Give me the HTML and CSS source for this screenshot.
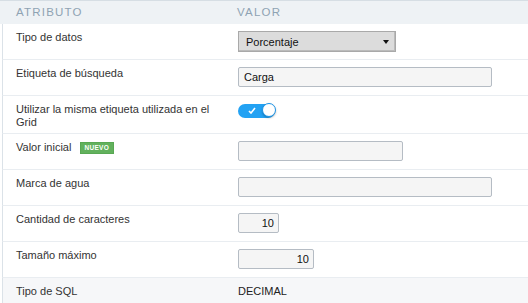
FILE: index.html
```html
<!DOCTYPE html>
<html lang="es">
<head>
<meta charset="utf-8">
<link rel="stylesheet" href="styles.css">
</head>
<body>
<div class="grid">
  <div class="head">
    <div class="hcell">ATRIBUTO</div>
    <div class="hcell">VALOR</div>
  </div>
  <div class="row">
    <div class="label">Tipo de datos</div>
    <div class="val"><div class="select"><span>Porcentaje</span><span class="arrow"></span></div></div>
  </div>
  <div class="row">
    <div class="label">Etiqueta de búsqueda</div>
    <div class="val"><div class="input wide">Carga</div></div>
  </div>
  <div class="row tall">
    <div class="label">Utilizar la misma etiqueta utilizada en el Grid</div>
    <div class="val">
      <div class="toggle">
        <svg class="check" width="8" height="7" viewBox="0 0 8 7"><path d="M1 4 L3 6 L7 1" fill="none" stroke="#fff" stroke-width="1.6"/></svg>
        <span class="knob"></span>
      </div>
    </div>
  </div>
  <div class="row">
    <div class="label">Valor inicial <span class="badge">NUEVO</span></div>
    <div class="val"><div class="input mid"></div></div>
  </div>
  <div class="row">
    <div class="label">Marca de agua</div>
    <div class="val"><div class="input wide"></div></div>
  </div>
  <div class="row">
    <div class="label">Cantidad de caracteres</div>
    <div class="val"><div class="input num small">10</div></div>
  </div>
  <div class="row">
    <div class="label">Tamaño máximo</div>
    <div class="val"><div class="input num medium">10</div></div>
  </div>
  <div class="row last">
    <div class="label">Tipo de SQL</div>
    <div class="val text">DECIMAL</div>
  </div>
</div>
</body>
</html>
```
FILE: styles.css
```css
* { box-sizing: border-box; }
html, body { margin: 0; padding: 0; background: #fff; }
body {
  font-family: "Liberation Sans", Arial, sans-serif;
  font-size: 11px;
  color: #333;
  width: 528px;
  height: 303px;
  overflow: hidden;
}
.head {
  display: grid;
  grid-template-columns: 237px 1fr;
  height: 24px;
  background: #eef2f5;
  border-top: 1px solid #d6dee4;
}
.hcell {
  padding-top: 5px;
  font-size: 11.5px;
  letter-spacing: 1.2px;
  color: #8ea3b3;
}
.hcell:first-child { padding-left: 16px; }
.row {
  display: grid;
  grid-template-columns: 235px 1fr;
  margin-left: 2px;
  border-left: 1px solid #dbe2e8;
  border-bottom: 1px solid #e9edf1;
  height: 36px;
}
.row.tall { height: 38px; }
.row.last { background: #f6f7f9; border-bottom: none; height: 27px; }
.label {
  padding: 7px 0 0 13px;
  line-height: 13px;
  color: #333;
  width: 210px;
}
.val { padding-top: 7px; }
.val.text { padding-top: 7px; color: #222; }
.select {
  width: 158px;
  height: 21px;
  border: 1px solid #a9a9a9;
  background: #dcdcdc;
  display: flex;
  align-items: center;
  justify-content: space-between;
  padding: 0 6px 0 7px;
  color: #111;
  box-shadow: inset -1px -1px 0 #bbb;
}
.arrow {
  width: 0; height: 0;
  border-left: 3.5px solid transparent;
  border-right: 3.5px solid transparent;
  border-top: 4px solid #111;
}
.input {
  height: 20px;
  border: 1px solid #b5bcc4;
  border-radius: 2px;
  background: #f5f5f5;
  padding: 0 5px;
  line-height: 18px;
  color: #111;
}
.wide { width: 254px; }
.mid { width: 165px; }
.small { width: 41px; }
.medium { width: 76px; }
.num { text-align: right; padding-right: 4px; }
.toggle {
  margin-top: 1px;
  width: 37px;
  height: 14px;
  border-radius: 7px;
  background: #23a2f3;
  position: relative;
}
.check { position: absolute; left: 10px; top: 3px; }
.knob {
  position: absolute;
  right: -1px;
  top: -1px;
  width: 14px;
  height: 14px;
  border-radius: 50%;
  background: #fff;
  border: 1px solid #1b93e6;
  box-shadow: 0 1px 2px rgba(0,0,0,0.25);
}
.badge {
  display: inline-block;
  margin-left: 5px;
  background: #62b15d;
  color: #fff;
  font-size: 6.5px;
  font-weight: bold;
  letter-spacing: 0.3px;
  padding: 1px 4px;
  border: 1px solid #58a853;
  line-height: 8px;
  vertical-align: 1px;
}
```
